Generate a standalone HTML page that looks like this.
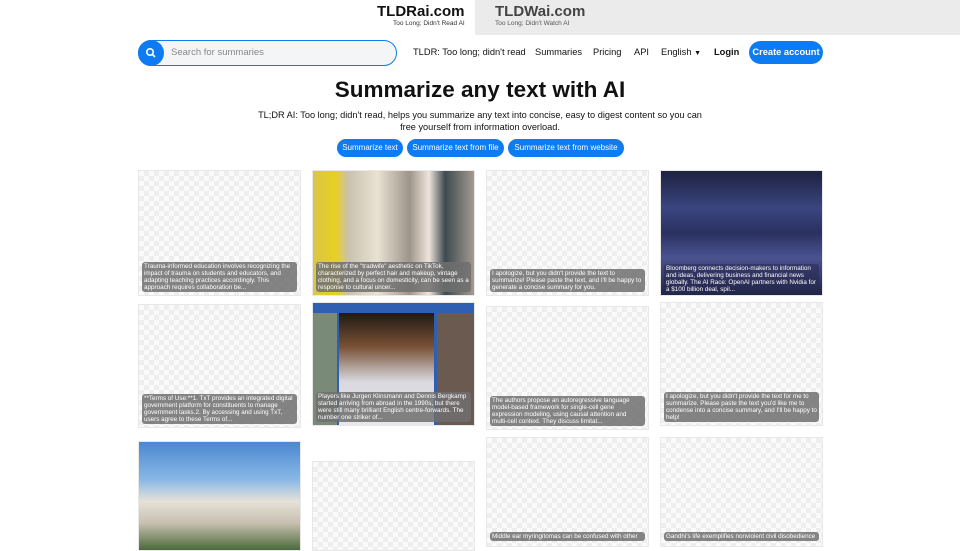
<!DOCTYPE html>
<html><head><meta charset="utf-8"><style>
*{box-sizing:border-box;margin:0;padding:0}
body{width:960px;height:540px;overflow:hidden;background:#fff;font-family:"Liberation Sans",sans-serif;color:#111;position:relative}
.abs{position:absolute;white-space:nowrap}
.gray{left:475px;top:0;width:485px;height:35px;background:#ebebeb}
.logo{font-weight:bold;font-size:15px}
.sub{font-size:6.5px;color:#333}
.nav a{position:absolute;top:47px;font-size:9.3px;color:#111;text-decoration:none;white-space:nowrap}
.btn{position:absolute;background:#0d7cf2;color:#fff;border-radius:10px;font-size:8px;line-height:18px;height:18px;text-align:center;top:139px;white-space:nowrap}
.card{position:absolute;width:163px;border:1px solid #e8e8e8;background-color:#f7f7f7;background-image:repeating-conic-gradient(#eee 0 25%,#fafafa 0 50%);background-size:10px 10px;overflow:hidden}
.cap{position:absolute;left:3px;right:3px;background:rgba(110,110,110,.85);color:#fff;font-size:6.3px;line-height:7px;padding:1px 2px;border-radius:3px}
</style></head><body>
<div class="abs gray"></div>
<div class="abs logo" style="left:377px;top:3px">TLDRai.com</div>
<div class="abs sub" style="left:393px;top:20px">Too Long; Didn't Read AI</div>
<div class="abs logo" style="left:495px;top:3px;color:#444">TLDWai.com</div>
<div class="abs sub" style="left:495px;top:20px;color:#555">Too Long; Didn't Watch AI</div>

<div class="abs" style="left:138px;top:40px;width:259px;height:26px;border:1px solid #0d7cf2;border-radius:13px;background:#f4f5f7"></div>
<div class="abs" style="left:138px;top:40px;width:26px;height:26px;border-radius:13px;background:#0d7cf2"></div>
<svg class="abs" style="left:145px;top:47px" width="12" height="12" viewBox="0 0 12 12"><circle cx="5" cy="5" r="3.2" stroke="#fff" stroke-width="1.6" fill="none"/><line x1="7.4" y1="7.4" x2="10" y2="10" stroke="#fff" stroke-width="1.6"/></svg>
<div class="abs" style="left:171px;top:47px;font-size:9.5px;color:#888">Search for summaries</div>
<div class="nav">
<a style="left:413px">TLDR: Too long; didn't read</a>
<a style="left:535px">Summaries</a>
<a style="left:593px">Pricing</a>
<a style="left:634px">API</a>
<a style="left:661px">English <span style="font-size:7px">▼</span></a>
<a style="left:714px;font-weight:bold">Login</a>
</div>
<div class="abs" style="left:749px;top:41px;width:74px;height:23px;border-radius:12px;background:#0d7cf2;color:#fff;font-size:9.3px;font-weight:bold;text-align:center;line-height:23px">Create account</div>

<div class="abs" style="left:0;width:960px;top:77px;text-align:center;font-size:22.5px;font-weight:bold">Summarize any text with AI</div>
<div class="abs" style="left:0;width:960px;top:109px;text-align:center;font-size:9.2px;line-height:12px">TL;DR AI: Too long; didn't read, helps you summarize any text into concise, easy to digest content so you can<br>free yourself from information overload.</div>
<div class="btn" style="left:337px;width:66px">Summarize text</div>
<div class="btn" style="left:407px;width:97px">Summarize text from file</div>
<div class="btn" style="left:508px;width:116px">Summarize text from website</div>

<div class="card" style="left:138px;top:170px;height:126px"><div class="cap" style="bottom:3px">Trauma-informed education involves recognizing the impact of trauma on students and educators, and adapting teaching practices accordingly. This approach requires collaboration be...</div></div>
<div class="card" style="left:312px;top:170px;height:126px;background:linear-gradient(90deg,#d9c64a 0,#e8d020 14%,#c9c2b0 22%,#e9e2d2 40%,#9d958a 60%,#f0e4dc 72%,#3d4a4f 82%,#a49a90 100%)"><div class="cap" style="bottom:3px">The rise of the "tradwife" aesthetic on TikTok, characterized by perfect hair and makeup, vintage clothing, and a focus on domesticity, can be seen as a response to cultural uncer...</div></div>
<div class="card" style="left:486px;top:170px;height:126px"><div class="cap" style="bottom:3px">I apologize, but you didn't provide the text to summarize! Please paste the text, and I'll be happy to generate a concise summary for you.</div></div>
<div class="card" style="left:660px;top:170px;height:126px;background:linear-gradient(180deg,#1d2240 0,#3a4580 30%,#2a3160 50%,#4a5390 70%,#1f2545 100%)"><div class="cap" style="bottom:1px;background:rgba(40,40,80,.5)">Bloomberg connects decision-makers to information and ideas, delivering business and financial news globally. The AI Race: OpenAI partners with Nvidia for a $100 billion deal, spil...</div></div>

<div class="card" style="left:138px;top:304px;height:124px"><div class="cap" style="bottom:3px">**Terms of Use:**1. TxT provides an integrated digital government platform for constituents to manage government tasks.2. By accessing and using TxT, users agree to these Terms of...</div></div>
<div class="card" style="left:312px;top:302px;height:124px;background:#2f5fb0"><div class="abs" style="left:26px;top:10px;width:95px;height:114px;background:linear-gradient(180deg,#201a14,#7a5236 30%,#d8d8de 60%,#e8e8ee)"></div><div class="abs" style="left:0;top:10px;width:24px;height:114px;background:#7a8a78"></div><div class="abs" style="left:124px;top:10px;width:39px;height:114px;background:#6a5a50"></div><div class="cap" style="bottom:3px">Players like Jurgen Klinsmann and Dennis Bergkamp started arriving from abroad in the 1990s, but there were still many brilliant English centre-forwards. The number one striker of...</div></div>
<div class="card" style="left:486px;top:306px;height:124px"><div class="cap" style="bottom:3px">The authors propose an autoregressive language model-based framework for single-cell gene expression modeling, using causal attention and multi-cell context. They discuss limitat...</div></div>
<div class="card" style="left:660px;top:302px;height:124px"><div class="cap" style="bottom:3px">I apologize, but you didn't provide the text for me to summarize. Please paste the text you'd like me to condense into a concise summary, and I'll be happy to help!</div></div>

<div class="card" style="left:138px;top:441px;height:110px;background:linear-gradient(180deg,#4a88d0 0,#8ab8e6 35%,#e6e2d8 55%,#c8c0b0 75%,#4a6a3a 100%)"></div>
<div class="card" style="left:312px;top:461px;height:90px"></div>
<div class="card" style="left:486px;top:437px;height:110px"><div class="cap" style="top:94px">Middle ear myringitomas can be confused with other</div></div>
<div class="card" style="left:660px;top:437px;height:110px"><div class="cap" style="top:94px">Gandhi's life exemplifies nonviolent civil disobedience</div></div>
</body></html>
